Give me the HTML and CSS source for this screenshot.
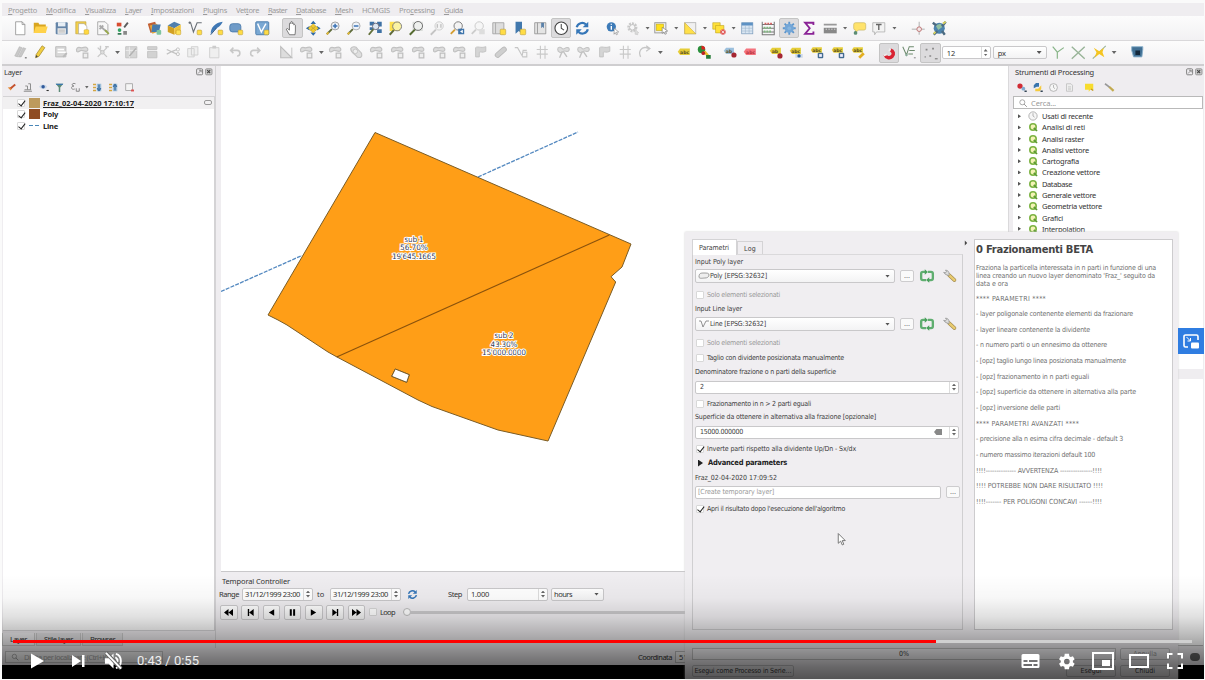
FILE: index.html
```html
<!DOCTYPE html>
<html lang="it">
<head>
<meta charset="utf-8">
<title>QGIS</title>
<link rel="stylesheet" href="styles.css">
</head>
<body>
<svg class="defs">
<symbol id="new" viewBox="0 0 20 20"><path d="M5 3h7l3 3v11H5z" fill="#fff" stroke="#888" stroke-width=".8"/><path d="M12 3v3h3" fill="none" stroke="#888" stroke-width=".8"/></symbol>
<symbol id="open" viewBox="0 0 20 20"><path d="M3 4h5l1 2h7v9H3z" fill="#d9a520"/><path d="M5 8h13l-2 7H3z" fill="#ffd24a"/></symbol>
<symbol id="save" viewBox="0 0 20 20"><rect x="4" y="3.500" width="13" height="13" rx="1" fill="#6585a8"/><rect x="6.500" y="3.500" width="8" height="4.500" fill="#e7eef5"/><rect x="6" y="10" width="9" height="6" fill="#eee"/><path d="M7 12h7M7 14h7" stroke="#999" stroke-width=".7"/></symbol>
<symbol id="layout" viewBox="0 0 20 20"><path d="M3 3h11v13H3z" fill="#f3d04d" stroke="#b99a2e" stroke-width=".6"/><path d="M6 5h6l3 3v8H6z" fill="#fff" stroke="#999" stroke-width=".6"/><rect x="12" y="11.500" width="5" height="5" rx="1" fill="#ffd83f" stroke="#c7a12a" stroke-width=".5"/></symbol>
<symbol id="layman" viewBox="0 0 20 20"><path d="M4 3h8l3 3v11H4z" fill="#f8f8f8" stroke="#888" stroke-width=".7"/><path d="M6 7l8 7M6 11l4-4" stroke="#aaa" stroke-width="2"/><path d="M12 12l4 4" stroke="#97a84a" stroke-width="2"/></symbol>
<symbol id="style" viewBox="0 0 20 20"><rect x="3" y="4" width="5" height="4" fill="#d84d31"/><circle cx="6" cy="12" r="2" fill="#35a465"/><path d="M4 15h4v2H4z" fill="#387a55"/><path d="M15 4l-4 5" stroke="#5c5c5c" stroke-width="2"/><path d="M10 13h4v4h-4z" fill="#888"/></symbol>
<symbol id="addlayer" viewBox="0 0 20 20"><path d="M3 5l8-2 3 9-8 3z" fill="#c25f33"/><path d="M5 7l8-2 3 8-8 3z" fill="#e3a63c"/><path d="M8 6h9l-2 8H7z" fill="#477bad"/><rect x="12.500" y="12" width="5" height="5" rx="1" fill="#7fc4a0"/></symbol>
<symbol id="geopkg" viewBox="0 0 20 20"><path d="M3 7l7-4 7 3-7 4z" fill="#4f7fae"/><path d="M3 7l7 3v7l-7-3z" fill="#d2a023"/><path d="M10 10l7-4v7l-7 4z" fill="#f0c33b"/><rect x="12" y="12" width="5" height="5" rx="1" fill="#ffe157" stroke="#b78d20" stroke-width=".5"/></symbol>
<symbol id="shp" viewBox="0 0 20 20"><path d="M3 4h2l3 10 4-10h5" fill="none" stroke="#6a7077" stroke-width="1.200"/><circle cx="4" cy="4" r="1.200" fill="#6a7077"/><rect x="12" y="12" width="5" height="5" rx="1" fill="#ffdc45" stroke="#b89c3c" stroke-width=".6"/></symbol>
<symbol id="spatial" viewBox="0 0 20 20"><path d="M4 16C4 9 9 4 17 3c-2 5-7 7-9 9z" fill="#3f78b5"/><path d="M4 17l6-7" stroke="#1e4d7c"/><rect x="12" y="12" width="5" height="5" rx="1" fill="#ffdc45" stroke="#b89c3c" stroke-width=".6"/></symbol>
<symbol id="virt" viewBox="0 0 20 20"><rect x="3" y="5" width="12" height="9" rx="3" fill="#6f9bc8" stroke="#3d70a6" stroke-width=".8"/><rect x="12" y="12" width="5" height="5" rx="1" fill="#ffdc45" stroke="#b89c3c" stroke-width=".6"/></symbol>
<symbol id="meshl" viewBox="0 0 20 20"><rect x="3" y="3" width="14" height="14" rx="1" fill="#7aa8d3" stroke="#4b7cab"/><path d="M5 5l4 9 5-9" fill="none" stroke="#fff" stroke-width="1.500"/><rect x="12" y="12" width="5" height="5" rx="1" fill="#ffdc45" stroke="#b89c3c" stroke-width=".6"/></symbol>
<symbol id="hand" viewBox="0 0 20 20"><path d="M7 17L3.500 11l1.300-.7L7 12V5c0-1 1.500-1 1.500 0V3.500c0-1 1.600-1 1.600 0V5c0-1 1.600-1 1.600 0v1.500c.5-.8 1.700-.5 1.700.5v6L13 17z" fill="#fff" stroke="#555" stroke-width=".8"/></symbol>
<symbol id="panto" viewBox="0 0 20 20"><path d="M10 2l3 3.500H7zM10 18l3-3.500H7zM2 10l4-2.500v5zM18 10l-4-2.500v5z" fill="#2f6aa8"/><path d="M10 5l2.700 2.500L10 10 7.300 7.500zM10 10l2.700 2.500L10 15l-2.700-2.500zM7 7.500L9.700 10 7 12.500 4.500 10zM13 7.500l2.500 2.500-2.500 2.500-2.700-2.500z" fill="#f2ca2e" stroke="#a88a16" stroke-width=".4"/></symbol>
<symbol id="zin" viewBox="0 0 20 20"><path d="M8.500 11L3 16.500" stroke="#5f6b3b" stroke-width="2"/><path d="M5 14.500l-2 2" stroke="#e2b93b" stroke-width="2"/><circle cx="12" cy="7.500" r="4.300" fill="#eef3f9" stroke="#999"/><path d="M12 5v5M9.500 7.500h5" stroke="#3b73b4" stroke-width="1.600"/></symbol>
<symbol id="zout" viewBox="0 0 20 20"><path d="M8.500 11L3 16.500" stroke="#5f6b3b" stroke-width="2"/><path d="M5 14.500l-2 2" stroke="#e2b93b" stroke-width="2"/><circle cx="12" cy="7.500" r="4.300" fill="#eef3f9" stroke="#aaa"/><path d="M9.500 7.500h5" stroke="#3b73b4" stroke-width="1.600"/></symbol>
<symbol id="zfull" viewBox="0 0 20 20"><path d="M4 3h5v4H4zM12 3h5v5h-5zM4 9h4v3H4zM12 11h5v4h-5z" fill="#3e71a4"/><circle cx="10.500" cy="8" r="3.500" fill="#dce6f1" stroke="#667"/><path d="M8 11l-5 6" stroke="#63703a" stroke-width="2"/></symbol>
<symbol id="zsel" viewBox="0 0 20 20"><rect x="4" y="3" width="11" height="10" fill="#ffe14d"/><circle cx="12" cy="8" r="4.800" fill="#fbf3a2" stroke="#777"/><path d="M8.500 12L4 17" stroke="#5f6b3b" stroke-width="2.200"/></symbol>
<symbol id="zlay" viewBox="0 0 20 20"><rect x="6" y="3" width="11" height="10" fill="#d9dcd9"/><circle cx="12" cy="7.500" r="4.800" fill="#eef0ee" stroke="#666"/><path d="M8.500 11.500L3 17" stroke="#566b32" stroke-width="2.200"/></symbol>
<symbol id="znat" viewBox="0 0 20 20"><circle cx="12" cy="7.500" r="4.500" fill="#f3f3f3" stroke="#ccc"/><path d="M8.500 11.500L3 17" stroke="#c4c4c4" stroke-width="2"/><path d="M10 5.500v4M14 5.500v4" stroke="#aaa"/></symbol>
<symbol id="zlast" viewBox="0 0 20 20"><circle cx="11" cy="7.500" r="4.500" fill="#f3f3f3" stroke="#777"/><path d="M7.500 11.500L3 16" stroke="#d39d31" stroke-width="2"/><rect x="11" y="10.500" width="6.500" height="6" fill="#3e74ab"/><path d="M16 11.500l-3 2 3 2z" fill="#fff"/></symbol>
<symbol id="znext" viewBox="0 0 20 20"><circle cx="11" cy="7.500" r="4.500" fill="#f6f6f6" stroke="#c9c9c9"/><path d="M7.500 11.500L3 16" stroke="#ccc" stroke-width="2"/><rect x="11" y="11" width="6" height="5.500" fill="#ddd"/></symbol>
<symbol id="newmap" viewBox="0 0 20 20"><path d="M3 4h12v12H3z" fill="#ddd" stroke="#999" stroke-width=".8"/><path d="M6 4v12" stroke="#aaa"/><rect x="11" y="11" width="6" height="6" rx="1" fill="#ffdc45" stroke="#b89c3c" stroke-width=".6"/></symbol>
<symbol id="book" viewBox="0 0 20 20"><path d="M6 3h7v13l-3.500-3L6 16z" fill="#4178ad"/><rect x="11" y="11" width="6" height="6" rx="1" fill="#ffdc45" stroke="#b89c3c" stroke-width=".6"/></symbol>
<symbol id="bmk" viewBox="0 0 20 20"><path d="M4 4h12v12H4z" fill="#e4e4e4" stroke="#888" stroke-width=".8"/><path d="M7 4v12" stroke="#999"/><path d="M11 4h3v6l-1.500-1.500L11 10z" fill="#587fa8"/></symbol>
<symbol id="clock" viewBox="0 0 20 20"><circle cx="10" cy="10" r="6.800" fill="#fff" stroke="#444" stroke-width="1.200"/><path d="M10 5.500V10l3 2" fill="none" stroke="#444" stroke-width="1.100"/></symbol>
<symbol id="refresh" viewBox="0 0 20 20"><path d="M4 9a6 6 0 0 1 10-3M16 11a6 6 0 0 1-10 3" fill="none" stroke="#3576b8" stroke-width="2.400"/><path d="M16.500 3v6h-6zM3.500 17v-6h6z" fill="#3576b8"/></symbol>
<symbol id="ident" viewBox="0 0 20 20"><circle cx="9" cy="8.500" r="5" fill="#3d7bb8"/><path d="M9 7.500v4M9 5v1.200" stroke="#fff" stroke-width="1.500"/><path d="M12 10l5 4-2.500.3 1.200 2.200-1.200.6-1.100-2.300L12 16.500z" fill="#fff" stroke="#777" stroke-width=".6"/></symbol>
<symbol id="action" viewBox="0 0 20 20"><circle cx="9" cy="9" r="4" fill="none" stroke="#c9c9c9" stroke-width="3" stroke-dasharray="2 1"/><circle cx="9" cy="9" r="3" fill="none" stroke="#c4c4c4"/><path d="M12 11l4 4-2 .3 1 1.700-3-.5z" fill="#ddd" stroke="#bbb" stroke-width=".5"/></symbol>
<symbol id="select" viewBox="0 0 20 20"><rect x="3" y="4" width="12" height="11" fill="#eee" stroke="#999"/><rect x="4.500" y="5.500" width="8" height="7" fill="#ffe11c" stroke="#baa51d" stroke-width=".6"/><path d="M11 9l6 4-2.500.5 1 2.500-1.500.5-1-2.500-2 1.500z" fill="#fff" stroke="#666" stroke-width=".6"/></symbol>
<symbol id="selval" viewBox="0 0 20 20"><rect x="4" y="4" width="12" height="12" fill="#f0f0f0" stroke="#aaa" stroke-width=".8"/><path d="M4 4l12 12H4z" fill="#ffe04a" stroke="#c8aa33" stroke-width=".6"/></symbol>
<symbol id="desel" viewBox="0 0 20 20"><path d="M3 4h8v7H3z" fill="#ffe13a" stroke="#baa01c" stroke-width=".6"/><path d="M6 7h9v8H6z" fill="#ffe13a" stroke="#baa01c" stroke-width=".6"/><circle cx="14" cy="14" r="3" fill="#e05a5a"/><path d="M12.500 12.500l3 3M15.500 12.500l-3 3" stroke="#fff" stroke-width=".8"/></symbol>
<symbol id="table" viewBox="0 0 20 20"><rect x="4" y="4" width="12" height="12" fill="#dbe7f3" stroke="#7c9cbd" stroke-width=".8"/><path d="M4 4h12v3H4z" fill="#5e92c4"/><path d="M8 7v9M12 7v9M4 10h12M4 13h12" stroke="#9bb4cd" stroke-width=".6"/></symbol>
<symbol id="abacus" viewBox="0 0 20 20"><path d="M3.500 3v14M16.500 3v14M3 6h14M3 10h14M3 14h14M3 17h14" stroke="#777" stroke-width="1.100"/><path d="M6 5h8" stroke="#d96262" stroke-width="2" stroke-dasharray="2 1"/><path d="M5 9.500h9M5 13.500h9" stroke="#80b980" stroke-width="2" stroke-dasharray="2 1"/></symbol>
<symbol id="gear" viewBox="0 0 20 20"><path d="M10 3v14M3 10h14M5 5l10 10M15 5L5 15" stroke="#5d96cd" stroke-width="2"/><circle cx="10" cy="10" r="5" fill="#73a6d7"/><circle cx="10" cy="10" r="2" fill="#87b5de"/></symbol>
<symbol id="sigma" viewBox="0 0 20 20"><path d="M14.500 6.500V4h-9l5 6-5 6h9v-2.500" fill="none" stroke="#8a2396" stroke-width="2"/></symbol>
<symbol id="ruler" viewBox="0 0 20 20"><path d="M3 6h14" stroke="#999" stroke-width="2"/><rect x="3" y="9.500" width="14" height="6" fill="#888"/><path d="M5 11h1.500M8 11h1.500M11 11h1.500M14 11h1.500" stroke="#ddd" stroke-width="1"/></symbol>
<symbol id="tip" viewBox="0 0 20 20"><path d="M6 4h9a2 2 0 0 1 2 2v4a2 2 0 0 1-2 2H9l-3 3v-3a2 2 0 0 1-2-2V6a2 2 0 0 1 2-2z" fill="#ffe36c" stroke="#c8b45c" stroke-width=".7"/><circle cx="6" cy="15" r="2" fill="#5b8c74"/></symbol>
<symbol id="annot" viewBox="0 0 20 20"><path d="M3 4h13v10H7l-2 3v-3H3z" fill="#f3f3f3" stroke="#aaa" stroke-width=".8"/><path d="M6.500 6h6M9.500 6v6" stroke="#666" stroke-width="1.500"/></symbol>
<symbol id="cross" viewBox="0 0 20 20"><path d="M11 3v14M3 11h14" stroke="#aaa"/><circle cx="11" cy="11" r="2.500" fill="#f3e8e8" stroke="#bc6f6f"/></symbol>
<symbol id="globe" viewBox="0 0 20 20"><circle cx="10" cy="10" r="6" fill="#4c83ad"/><path d="M6 7l5-2 3 3-5 4z" fill="#90bfa0"/><path d="M3 4l4 3M17 3l-4 5M4 17l4-4M16 17l-3-4" stroke="#4c6b82" stroke-width="2.600"/><path d="M14 5l3-2M4 16l2-2" stroke="#d6cf5b" stroke-width="2"/></symbol>
<symbol id="pens" viewBox="0 0 20 20"><path d="M4 14L9 4l3 1-5 10zM8 15l5-10 3 1-5 9z" fill="#c8c8c8" stroke="#aaa" stroke-width=".5"/><path d="M15 16h2" stroke="#888" stroke-width="1.500"/></symbol>
<symbol id="pen" viewBox="0 0 20 20"><path d="M5.500 12.500L12 3l3 2-6.500 9.500L5 16z" fill="#f1ce42" stroke="#987e25" stroke-width=".7"/><path d="M5.500 13L5 16l2.500-1.500z" fill="#444"/></symbol>
<symbol id="gsave" viewBox="0 0 20 20"><path d="M4 4h11v11H4z" fill="#d7d7d7" stroke="#bbb"/><path d="M6 7h7M6 10h9" stroke="#fff" stroke-width="1.500"/><path d="M12 15l4-4" stroke="#bbb" stroke-width="2"/></symbol>
<symbol id="gpoly" viewBox="0 0 20 20"><path d="M4 9c-1-3 1-5 4-4s5-2 7 0 1 4-1 4-3-1-5-1-3 3-5 1z" fill="#dcdcdc" stroke="#c2c2c2" stroke-width="1.300"/><path d="M11 11h5v5h-5z" fill="#eee" stroke="#bdbdbd" stroke-width="1.300"/></symbol>
<symbol id="gnode" viewBox="0 0 20 20"><path d="M4 5l10 10M14 5L4 15M12 4h4M7 3v4" stroke="#c9c9c9" stroke-width="1.500"/><circle cx="9" cy="10" r="2" fill="#ddd" stroke="#c2c2c2"/></symbol>
<symbol id="gtable" viewBox="0 0 20 20"><path d="M4 4h12v12H4z" fill="#d5d5d5" stroke="#c2c2c2"/><path d="M4 8h12M8 4v12" stroke="#eee"/><path d="M8 14l7-8" stroke="#b2b2b2" stroke-width="1.500"/></symbol>
<symbol id="gtrash" viewBox="0 0 20 20"><path d="M5 4h10v3H5zM5 9h10v7H5z" fill="#d2d2d2" stroke="#c2c2c2"/></symbol>
<symbol id="gcut" viewBox="0 0 20 20"><path d="M3 7l11 5M3 12l6-3 5-2" stroke="#c2c2c2" stroke-width="1.300" fill="none"/><circle cx="15" cy="7" r="1.700" fill="none" stroke="#c2c2c2"/><circle cx="15" cy="12" r="1.700" fill="none" stroke="#c2c2c2"/></symbol>
<symbol id="gcopy" viewBox="0 0 20 20"><path d="M4 6h7v9H4zM8 4h7v9H8z" fill="#efefef" stroke="#cfcfcf"/></symbol>
<symbol id="gpaste" viewBox="0 0 20 20"><path d="M5 5h10v11H5z" fill="#efefef" stroke="#cfcfcf"/><path d="M8 3h4v3H8z" fill="#ccc"/></symbol>
<symbol id="gundo" viewBox="0 0 20 20"><path d="M5 8h7c4 0 4 6 0 6M8 5L5 8l3 3" fill="none" stroke="#c8c8c8" stroke-width="1.700"/></symbol>
<symbol id="gredo" viewBox="0 0 20 20"><path d="M15 8H8c-4 0-4 6 0 6M12 5l3 3-3 3" fill="none" stroke="#c8c8c8" stroke-width="1.700"/></symbol>
<symbol id="gtri" viewBox="0 0 20 20"><path d="M4 4l12 12H4z" fill="#ddd" stroke="#bdbdbd" stroke-width="1.200"/><path d="M16 5v11" stroke="#c2c2c2"/></symbol>
<symbol id="gdonut" viewBox="0 0 20 20"><path d="M4 6c2-3 6-2 7 0s5 3 5 7-5 3-6 1-6-3-6-8z" fill="#dedede" stroke="#c2c2c2" stroke-width="1.200"/><circle cx="9" cy="9" r="2.500" fill="#eee" stroke="#c2c2c2"/></symbol>
<symbol id="gband" viewBox="0 0 20 20"><path d="M6 13L13 7" stroke="#bcbcbc" stroke-width="6" stroke-linecap="round"/><path d="M6 13L13 7" stroke="#cfcfcf" stroke-width="4" stroke-linecap="round"/></symbol>
<symbol id="gflag" viewBox="0 0 20 20"><path d="M5 15V5c3-2 5 1 11-1v5c-4 2-5 0-7 1v5z" fill="#d5d5d5" stroke="#c2c2c2"/></symbol>
<symbol id="gline" viewBox="0 0 20 20"><path d="M3 5h3l5 9 1-6h4M11 10h5v5h-5" fill="none" stroke="#c6c6c6" stroke-width="1.200"/></symbol>
<symbol id="gsplit" viewBox="0 0 20 20"><path d="M4 7c0-3 3-3 5-1s3-2 6-1 1 5-2 4-3 0-4 1-5 0-5-3z" fill="#ddd" stroke="#c4c4c4" stroke-width="1.200"/><path d="M9 9l-3 7M10 9l4 6" stroke="#c2c2c2" stroke-width="1.500"/></symbol>
<symbol id="gvert" viewBox="0 0 20 20"><path d="M8 3v14M13 3v14M4 7h12M4 12h12" stroke="#c9c9c9" stroke-width="1.200"/></symbol>
<symbol id="grot" viewBox="0 0 20 20"><path d="M5 15c-3-6 1-11 6-10l3 1M11 3l4 3-4 3" fill="none" stroke="#c6c6c6" stroke-width="1.400"/></symbol>
<symbol id="lab" viewBox="0 0 20 20"><path d="M3 9.500l2.500-3.500H16v7H5.500z" fill="#e5cd38"/><text x="5.500" y="11.800" class="abc">abc</text></symbol>
<symbol id="diag" viewBox="0 0 20 20"><circle cx="7" cy="7" r="4" fill="#2a8f3b"/><path d="M7 3a4 4 0 0 1 4 4H7z" fill="#d22"/><path d="M10 9l5 6" stroke="#eac22c" stroke-width="3"/><path d="M12 13h5v4h-5z" fill="#287c38"/><circle cx="9" cy="11" r="2" fill="#b22"/></symbol>
<symbol id="labpin" viewBox="0 0 20 20"><path d="M3 8.500l2.500-3.500H14v7H5.500z" fill="#9cc0dd"/><text x="5" y="10.800" class="abc">ab</text><circle cx="14" cy="13" r="2.800" fill="#a52632"/></symbol>
<symbol id="labred" viewBox="0 0 20 20"><path d="M3 9.500l2.500-3.500H16v7H5.500z" fill="#f4737d"/><text x="5.500" y="11.800" class="abc red">abc</text></symbol>
<symbol id="labpin2" viewBox="0 0 20 20"><path d="M3 8.500l2.500-3.500H15v7H5.500z" fill="#e5cd38"/><text x="5" y="10.800" class="abc">ab</text><circle cx="14" cy="14" r="2.800" fill="#a52632"/></symbol>
<symbol id="labeye" viewBox="0 0 20 20"><path d="M3 8.500l2.500-3.500H15v7H5.500z" fill="#e5cd38"/><text x="4.500" y="10.800" class="abc">abc</text><path d="M9 12h8v4H9z" fill="#cdd9e6"/><circle cx="13" cy="14" r="1.800" fill="#2e5f96"/></symbol>
<symbol id="labmv" viewBox="0 0 20 20"><path d="M3 7.500l2-3h10v6H5z" fill="#e5cd38"/><text x="4.500" y="9.500" class="abc">abc</text><rect x="10.500" y="10.500" width="6" height="6" rx="1" fill="#456c91"/><rect x="12" y="12" width="3" height="3" fill="#eef"/></symbol>
<symbol id="labed" viewBox="0 0 20 20"><path d="M3 7.500l2-3h10v6H5z" fill="#e5cd38"/><text x="4.500" y="9.500" class="abc">abc</text><path d="M11 16l5-5" stroke="#e3ae20" stroke-width="3"/></symbol>
<symbol id="magnet" viewBox="0 0 20 20"><path d="M5.500 11.500c1 3.500 5 4.500 7.500 2s1.700-6-2-7" fill="none" stroke="#d92231" stroke-width="3.800"/><path d="M4 12.300l3.500-1M10 8l1.200-3.300" stroke="#eee" stroke-width="2"/></symbol>
<symbol id="vtx" viewBox="0 0 20 20"><path d="M3 4l4 9 3-9h5M10 8h6M9 12h5" fill="none" stroke="#6d8a6d" stroke-width="1.100"/><circle cx="7" cy="13" r="1.300" fill="#8a9"/><path d="M15 16h2" stroke="#777"/></symbol>
<symbol id="dots" viewBox="0 0 20 20"><path d="M5 6h2M12 5h2M9 13h2M4 14h1" stroke="#888" stroke-width="1.800"/><path d="M15 16h3" stroke="#666"/></symbol>
<symbol id="topo" viewBox="0 0 20 20"><path d="M4 4l5 6 7-5M9 10v7" fill="none" stroke="#89b589" stroke-width="1.300"/></symbol>
<symbol id="inter" viewBox="0 0 20 20"><path d="M3 4l14 13M17 4L3 17" stroke="#98b498" stroke-width="1.500"/></symbol>
<symbol id="star" viewBox="0 0 20 20"><path d="M17 3L3 17" stroke="#9ab49a" stroke-width="1.200"/><path d="M4 5l6 4 5-4-1.500 5 2 5.500L10 12l-5 4 2-6z" fill="#f5c521"/></symbol>
<symbol id="plug" viewBox="0 0 20 20"><path d="M4 4h12v3l-1 8H6L4 8z" fill="#406f93" stroke="#8ab1cc"/><path d="M8 8h5v5H8z" fill="#14283b"/></symbol>
<symbol id="brush" viewBox="0 0 20 20"><path d="M5 10l4 4 3-5z" fill="#e48a3a"/><path d="M9 11l6-5" stroke="#c4522f" stroke-width="2.500"/></symbol>
<symbol id="grp" viewBox="0 0 20 20"><path d="M6 13h9M7 8h3v5M11 5h3v8M5 15h11" fill="none" stroke="#8c8c8c" stroke-width="1.300"/></symbol>
<symbol id="eye" viewBox="0 0 20 20"><path d="M4 9c3-4 8-4 11 0-3 4-8 4-11 0z" fill="#cbd8e8"/><circle cx="9.500" cy="9" r="2.300" fill="#315a9b"/><path d="M14 14h3" stroke="#333" stroke-width="1.500"/></symbol>
<symbol id="funnel" viewBox="0 0 20 20"><path d="M5 5h10l-4 5v6H9v-6z" fill="#5e8b78"/><path d="M5 5h10l-1 1.500H6z" fill="#3c78af"/></symbol>
<symbol id="eps" viewBox="0 0 20 20"><path d="M10 5c-5-2-6 3-2 3-5 0-4 6 1 4M11 11v4h4v-4" fill="none" stroke="#777" stroke-width="1.100"/></symbol>
<symbol id="exp" viewBox="0 0 20 20"><path d="M4 6h4M4 10h4M4 14h4" stroke="#d4a642" stroke-width="2"/><path d="M9 5h6v10H9z" fill="#9dbfda"/><path d="M12 6v6M9.500 11l2.500 3 2.500-3" stroke="#2a6199" fill="none" stroke-width="1.500"/></symbol>
<symbol id="col" viewBox="0 0 20 20"><path d="M4 6h4M4 10h4M4 14h4" stroke="#d4a642" stroke-width="2"/><path d="M9 5h6v10H9z" fill="#9dbfda"/><path d="M12 14V8M9.500 9L12 6l2.500 3" stroke="#2a6199" fill="none" stroke-width="1.500"/></symbol>
<symbol id="rem" viewBox="0 0 20 20"><rect x="5" y="5" width="9" height="9" fill="#f4f4f4" stroke="#999"/><path d="M12 14h4" stroke="#dd5151" stroke-width="2.500"/></symbol>
<symbol id="model" viewBox="0 0 20 20"><circle cx="8" cy="8" r="3.500" fill="#d02b35"/><circle cx="12.500" cy="11.500" r="2.500" fill="#7fa9cf"/><path d="M14 15h3" stroke="#345" stroke-width="2"/></symbol>
<symbol id="py" viewBox="0 0 20 20"><path d="M5 11V7l3-3h4v5H9z" fill="#3975ae"/><path d="M15 7v5l-2 3H7v-3.500h4z" fill="#f5cb3e"/><path d="M14 15h3" stroke="#345" stroke-width="2"/></symbol>
<symbol id="gclock" viewBox="0 0 20 20"><circle cx="10" cy="10" r="5.200" fill="#f6f6f6" stroke="#a3a3a3"/><path d="M10 6.500V10l2 1.500" fill="none" stroke="#999" stroke-width=".9"/></symbol>
<symbol id="doc" viewBox="0 0 20 20"><path d="M6 5h6l2 2v8H6z" fill="#eee" stroke="#bbb"/><path d="M8 9h4M8 11h4M8 13h4" stroke="#bbb" stroke-width=".8"/></symbol>
<symbol id="note" viewBox="0 0 20 20"><path d="M4 5h11v8h-4l-2 3v-3H4z" fill="#f7dc2e"/><path d="M12 12l3 2" stroke="#c49a22" stroke-width="2"/></symbol>
<symbol id="wrench" viewBox="0 0 20 20"><path d="M9 9l6 5.500" stroke="#a28b50" stroke-width="4" stroke-linecap="round"/><path d="M9 9l6 5.500" stroke="#e9cb6f" stroke-width="2.600" stroke-linecap="round"/><path d="M9.500 9.500C7 9.500 4 8 3 6l2 .5L6 5 5 3.500c2 0 4.500 1.500 4 5" fill="#ddd" stroke="#888" stroke-width=".8"/></symbol>
<symbol id="swrench" viewBox="0 0 20 20"><path d="M9.500 9l6 5.500" stroke="#c2aa4f" stroke-width="3"/><path d="M4 5l6 4.500" stroke="#999" stroke-width="2.200"/></symbol>
<symbol id="iter" viewBox="0 0 20 20"><path d="M8 5.500H5.500a2 2 0 0 0-2 2v5a2 2 0 0 0 2 2H9M11 5.500h3.500a2 2 0 0 1 2 2v5a2 2 0 0 1-2 2H12" fill="none" stroke="#5fae70" stroke-width="2.600"/><path d="M7.500 2.500L11 5.500 7.500 8.500zM12.500 11.500L9 14.500l3.500 3z" fill="#49a05c"/></symbol>
<symbol id="q" viewBox="0 0 20 20"><circle cx="10" cy="10" r="4" fill="#f4f3b6" stroke="#7cb342" stroke-width="2"/><path d="M11 11l4 4" stroke="#5d9b31" stroke-width="2.200"/></symbol>
<symbol id="lens" viewBox="0 0 20 20"><circle cx="9" cy="9" r="3.600" fill="none" stroke="#888" stroke-width="1"/><path d="M11.500 11.500l4 4" stroke="#888" stroke-width="1.200"/></symbol>
<symbol id="float" viewBox="0 0 8 8"><rect x=".6" y=".8" width="6" height="6" rx="1" fill="none" stroke="#777" stroke-width=".9"/><path d="M2 5.500L5 2.500M3 2.300h2.200v2" stroke="#777" stroke-width=".8" fill="none"/></symbol>
<symbol id="close" viewBox="0 0 8 8"><rect x=".6" y=".8" width="6.400" height="6" rx="1" fill="#ccc" stroke="#888" stroke-width=".8"/><path d="M2.200 2.200l3 3M5.200 2.200l-3 3" stroke="#444" stroke-width="1.100"/></symbol>
</svg>

<div class="video">
<div class="qgis">
  <nav class="menu">
    <span data-w="29"><u>P</u>rogetto</span><span data-w="30"><u>M</u>odifica</span><span data-w="31"><u>V</u>isualizza</span><span data-w="17"><u>L</u>ayer</span><span data-w="43"><u>I</u>mpostazioni</span><span data-w="24"><u>P</u>lugins</span><span data-w="23">Vet<u>t</u>ore</span><span data-w="19"><u>R</u>aster</span><span data-w="30"><u>D</u>atabase</span><span data-w="18"><u>M</u>esh</span><span data-w="28">HCMGIS</span><span data-w="36">Pro<u>c</u>essing</span><span data-w="19"><u>G</u>uida</span>
  </nav>
  <div class="toolbar" data-icons="new open save layout layman style | addlayer geopkg shp spatial virt ; meshl | *hand panto zin zout zfull zsel zlay znat zlast znext newmap book bmk *clock refresh | ident action > select > selval > desel > table abacus *gear sigma ruler > tip annot > | cross globe"></div>
  <div class="toolbar second">
    <div class="icons" data-icons="pens pen gsave gpoly gnode > gtable gtrash gcut gcopy gpaste gundo gredo | gtri gpoly > gpoly gdonut gpoly gpoly gpoly gpoly gpoly gflag gband gline gvert gsplit gsplit gflag gvert grot > | lab diag ; labpin labred ; labpin2 labeye labmv labmv labed | *magnet vtx *dots"></div>
    <div class="field snap"><span>12</span><i class="spin"></i></div>
    <div class="combo unit"><span>px</span><i class="arrow"></i></div>
    <div class="icons" data-icons="topo inter star > | plug"></div>
  </div>

  <div class="main">
    <aside class="left">
      <div class="title"><span data-w="18">Layer</span><span class="dock"><svg><use href="#float"/></svg><svg><use href="#close"/></svg></span></div>
      <div class="panelbar leftbar" data-icons="brush grp eye funnel eps > exp col rem"></div>
      <div class="layers">
        <div class="layer sel"><i class="chk on"></i><i class="sw tan"></i><b data-w="91"><u>Fraz_02-04-2020 17:10:17</u></b><i class="mem"></i></div>
        <div class="layer"><i class="chk on"></i><i class="sw brown"></i><b data-w="15">Poly</b></div>
        <div class="layer"><i class="chk on"></i><i class="sw dash"></i><b data-w="15">Line</b></div>
      </div>
      <div class="tabs"><span class="cur" data-w="17">Layer</span><span data-w="29">Stile layer</span><span data-w="25">Browser</span></div>
    </aside>

    <section class="center">
      <svg class="map" viewBox="221 66 787 505">
        <path class="guide" d="M221 291.500L302 255.500M478 177L578 132"/>
        <path class="parcel" fill-rule="evenodd" d="M375 132.500L631 244 622 267 611 276.700 615.700 282 548 441 498 430 432 406.500 418 400 337 357 328 352 287 325 278 320 268 315zM395.300 369l14 5.700-2.600 7.600-15-6z"/>
        <path class="divider" d="M609.300 235L336.700 357"/>
        <path class="hole" d="M395.300 369l14 5.700-2.600 7.600-15-6z"/>
        <g class="maplabel">
          <text x="414" y="241.500" textLength="19">sub 1</text><text x="414" y="250" textLength="28">56.70%</text><text x="414" y="258.500" textLength="44">19'645.1665</text>
          <text x="504" y="338" textLength="19">sub 2</text><text x="504" y="346.500" textLength="27">43.30%</text><text x="504" y="355" textLength="44">15'000.0000</text>
        </g>
      </svg>
      <div class="temporal">
        <div class="trow head"><span data-w="68">Temporal Controller</span></div>
        <div class="trow range">
          <span data-w="20">Range</span>
          <div class="field date"><span data-w="55">31/12/1999 23:00</span><i class="spin"></i></div>
          <span class="to">to</span>
          <div class="field date"><span data-w="55">31/12/1999 23:00</span><i class="spin"></i></div>
          <svg class="tref"><use href="#refresh"/></svg>
          <span class="step" data-w="14">Step</span>
          <div class="field stepf"><span data-w="18">1.000</span><i class="spin"></i></div>
          <div class="combo hours"><span data-w="18">hours</span><i class="arrow"></i></div>
        </div>
        <div class="trow play">
          <button><svg viewBox="0 0 12 10"><path d="M6 1v8L1 5zM11 1v8L6 5z"/></svg></button>
          <button><svg viewBox="0 0 12 10"><path d="M3 1h1.500v8H3zM9.500 1v8L4.500 5z"/></svg></button>
          <button><svg viewBox="0 0 12 10"><path d="M9 1.500v7L3 5z"/></svg></button>
          <button><svg viewBox="0 0 12 10"><path d="M3 1.500h2.200v7H3zM6.700 1.500h2.200v7H6.700z"/></svg></button>
          <button><svg viewBox="0 0 12 10"><path d="M3 1.500v7L9 5z"/></svg></button>
          <button><svg viewBox="0 0 12 10"><path d="M2.500 1v8l5-4zM7.500 1H9v8H7.500z"/></svg></button>
          <button><svg viewBox="0 0 12 10"><path d="M1 1v8l5-4zM6 1v8l5-4z"/></svg></button>
          <i class="chk"></i><span class="loop" data-w="15">Loop</span><i class="knob"></i><i class="groove"></i>
        </div>
      </div>
    </section>

    <aside class="right">
      <div class="title"><span data-w="79">Strumenti di Processing</span><span class="dock"><svg><use href="#float"/></svg><svg><use href="#close"/></svg></span></div>
      <div class="panelbar rightbar" data-icons="model py gclock doc ; note ; swrench"></div>
      <div class="search"><svg><use href="#lens"/></svg><span data-w="25">Cerca...</span></div>
      <div class="tree">
        <div><svg><use href="#gclock"/></svg><span data-w="51">Usati di recente</span></div>
        <div><svg><use href="#q"/></svg><span data-w="43">Analisi di reti</span></div>
        <div><svg><use href="#q"/></svg><span data-w="42">Analisi raster</span></div>
        <div><svg><use href="#q"/></svg><span data-w="47">Analisi vettore</span></div>
        <div><svg><use href="#q"/></svg><span data-w="37">Cartografia</span></div>
        <div><svg><use href="#q"/></svg><span data-w="58">Creazione vettore</span></div>
        <div><svg><use href="#q"/></svg><span data-w="30">Database</span></div>
        <div><svg><use href="#q"/></svg><span data-w="54">Generale vettore</span></div>
        <div><svg><use href="#q"/></svg><span data-w="60">Geometria vettore</span></div>
        <div><svg><use href="#q"/></svg><span data-w="21">Grafici</span></div>
        <div><svg><use href="#q"/></svg><span data-w="43">Interpolation</span></div>
      </div>
      <div class="lower"></div>
    </aside>
  </div>
  <footer class="status">
    <div class="locate"><svg><use href="#lens"/></svg><span data-w="84">Digita per localizzare (Ctrl+K)</span></div>
    <span class="coord" data-w="34">Coordinata</span><div class="cbox">51</div><i class="msg"></i>
  </footer>
</div>

<div class="dialog">
  <div class="body">
    <div class="params">
      <div class="dtabs"><span class="cur"><em data-w="30">Parametri</em></span><span><em data-w="12">Log</em></span></div>
      <div class="pane">
        <div><span data-w="48">Input Poly layer</span></div>
        <div><div class="combo lay"><svg viewBox="0 0 12 8"><path d="M1 5c0-4 2-4 5-4s5 0 5 2-2 3-4 3-6 1-6-1z" fill="#eee" stroke="#888" stroke-width=".8"/></svg><span data-w="57">Poly [EPSG:32632]</span><i class="arrow"></i></div><div class="more">...</div><svg class="dic"><use href="#iter"/></svg><svg class="dic"><use href="#wrench"/></svg></div>
        <div class="off"><i class="chk"></i><span data-w="73">Solo elementi selezionati</span></div>
        <div><span data-w="47">Input Line layer</span></div>
        <div><div class="combo lay"><svg viewBox="0 0 12 8"><path d="M1 1h2l2 6 3-6h3" fill="none" stroke="#777" stroke-width=".8"/></svg><span data-w="56">Line [EPSG:32632]</span><i class="arrow"></i></div><div class="more">...</div><svg class="dic"><use href="#iter"/></svg><svg class="dic"><use href="#wrench"/></svg></div>
        <div class="off"><i class="chk"></i><span data-w="73">Solo elementi selezionati</span></div>
        <div><i class="chk"></i><span data-w="137">Taglio con dividente posizionata manualmente</span></div>
        <div><span data-w="141">Denominatore frazione o n parti della superficie</span></div>
        <div><div class="field wide"><span>2</span><i class="spin"></i></div></div>
        <div><i class="chk"></i><span data-w="104">Frazionamento in n &gt; 2 parti eguali</span></div>
        <div><span data-w="181">Superficie da ottenere in alternativa alla frazione [opzionale]</span></div>
        <div><div class="field wide"><span data-w="43">15000.000000</span><i class="clear"></i><i class="spin"></i></div></div>
        <div><i class="chk on"></i><span data-w="149">Inverte parti rispetto alla dividente Up/Dn - Sx/dx</span></div>
        <div class="adv"><i></i><b data-w="79">Advanced parameters</b></div>
        <div><span data-w="82">Fraz_02-04-2020 17:09:52</span></div>
        <div><div class="field out"><span data-w="76">[Create temporary layer]</span></div><div class="more">...</div></div>
        <div><i class="chk on"></i><span data-w="138">Apri il risultato dopo l'esecuzione dell'algoritmo</span></div>
      </div>
    </div>
    <div class="help">
      <h1><span data-w="117">0 Frazionamenti BETA</span></h1>
      <div class="intro"><span data-w="180">Fraziona la particella interessata in n parti in funzione di una</span><span data-w="179">linea creando un nuovo layer denominato 'Fraz_' seguito da</span><span data-w="32">data e ora</span></div>
      <p><span data-w="70">**** PARAMETRI ****</span></p>
      <p><span data-w="157">- layer poligonale contenente elementi da frazionare</span></p>
      <p><span data-w="114">- layer lineare contenente la dividente</span></p>
      <p><span data-w="131">- n numero parti o un ennesimo da ottenere</span></p>
      <p><span data-w="150">- [opz] taglio lungo linea posizionata manualmente</span></p>
      <p><span data-w="113">- [opz] frazionamento in n parti eguali</span></p>
      <p><span data-w="160">- [opz] superficie da ottenere in alternativa alla parte</span></p>
      <p><span data-w="84">- [opz] inversione delle parti</span></p>
      <p><span data-w="103">**** PARAMETRI AVANZATI ****</span></p>
      <p><span data-w="147">- precisione alla n esima cifra decimale - default 3</span></p>
      <p><span data-w="119">- numero massimo iterazioni default 100</span></p>
      <p><span data-w="126">!!!!-------------- AVVERTENZA ---------------!!!!</span></p>
      <p><span data-w="127">!!!! POTREBBE NON DARE RISULTATO !!!!</span></p>
      <p><span data-w="126">!!!!------- PER POLIGONI CONCAVI ------!!!!</span></p>
    </div>
  </div>
  <div class="progress"><div class="bar">0%</div><div class="btn dim">Annulla</div></div>
  <div class="actions"><div class="btn series"><span data-w="97">Esegui come Processo in Serie…</span></div><div class="btn">Esegui</div><div class="btn">Chiudi</div></div>
  <svg class="fold" viewBox="0 0 5 6"><path d="M1 0l3 3-3 3z"/></svg>
</div>
<svg class="cursor" viewBox="0 0 8 12"><path d="M1 .5v9l2.200-2L4.700 11l1.400-.6L4.700 7H7.500z" fill="#fff" stroke="#666" stroke-width=".8"/></svg>
<div class="pip"><svg viewBox="0 0 20 20"><path d="M7 16H4.500A1.500 1.500 0 0 1 3 14.500v-9A1.500 1.500 0 0 1 4.500 4h11A1.500 1.500 0 0 1 17 5.500V9" fill="none" stroke="#fff" stroke-width="1.600"/><path d="M5.500 6l4 4M9.500 7v3h-3" stroke="#fff" fill="none"/><rect x="10" y="11.500" width="8" height="6" rx="1" fill="#fff"/></svg></div>

<div class="player">
  <div class="seek"><i class="played"></i></div>
  <div class="controls">
    <svg class="pl" viewBox="0 0 14 16"><path d="M0 0l14 8-14 8z"/></svg>
    <svg class="nx" viewBox="0 0 13 12"><path d="M0 0l9 6-9 6zM10 0h2.500v12H10z"/></svg>
    <svg class="mu" viewBox="0 0 20 20"><path d="M1 7h4l5-5v16l-5-5H1z"/><path d="M12 6c3 2 3 6 0 8M12.500 2.500c7 2 7 13 0 15" fill="none" stroke="#fff" stroke-width="2"/><path d="M2 1l16 17" stroke="#666" stroke-width="4"/><path d="M2 1.500L18 18" stroke="#fff" stroke-width="2"/></svg>
    <span class="time" data-w="62">0:43 / 0:55</span>
    <div class="rightc">
      <svg class="cc" viewBox="0 0 18 14"><path fill-rule="evenodd" d="M1.500 0h15A1.500 1.500 0 0 1 18 1.500v11a1.500 1.500 0 0 1-1.500 1.500h-15A1.500 1.500 0 0 1 0 12.500v-11A1.500 1.500 0 0 1 1.500 0zM2 6v2h4V6zm5.500 0v2H16V6zM2 10v2h8.500v-2zm10 0v2h4v-2z"/></svg>
      <svg class="gr" viewBox="0 0 24 24"><path fill-rule="evenodd" d="M21 13.200c.1-.8.1-1.600 0-2.400l2.500-2-2.500-4.300-3 1.200a9 9 0 0 0-2-1.200L15.500 1h-6L9 4.500a9 9 0 0 0-2 1.200L4 4.500 1.500 8.800l2.500 2a9 9 0 0 0 0 2.400l-2.500 2L4 19.500l3-1.200c.6.500 1.300.9 2 1.200l.5 3.500h6l.5-3.500c.7-.3 1.400-.7 2-1.200l3 1.200 2.500-4.300zM12.500 16a4 4 0 1 1 0-8 4 4 0 0 1 0 8z"/></svg>
      <svg class="mp" viewBox="0 0 22 18"><rect x="1" y="1" width="20" height="16" fill="none" stroke="#fff" stroke-width="2"/><rect x="10" y="8" width="8" height="6"/></svg>
      <svg class="th" viewBox="0 0 20 14"><rect x="1" y="1" width="18" height="12" fill="none" stroke="#fff" stroke-width="2"/></svg>
      <svg class="fs" viewBox="0 0 16 16"><path d="M1 5.500V1h4.500M10.500 1H15v4.500M15 10.500V15h-4.500M5.500 15H1v-4.500" fill="none" stroke="#fff" stroke-width="2"/></svg>
    </div>
  </div>
</div>
</div>
<script src="app.js"></script>
</body>
</html>
```
FILE: styles.css
```css
* { box-sizing: border-box; }
body { margin: 0; width: 1205px; height: 680px; overflow: hidden; background: #fafafa; color: #333; font: 7.500px/8px "Noto Sans", "Open Sans", sans-serif; }
i, em { font-style: normal; }
i { display: block; flex: none; }
span, b, em { white-space: nowrap; }
svg { flex: none; display: block; }
.defs { position: absolute; width: 0; height: 0; }
.abc { font: bold 5px "DejaVu Sans", sans-serif; fill: #5a5020; }
.abc.red { fill: #b8323e; }
.video { position: relative; width: 1202px; height: 679px; margin-left: 2px; padding-top: 3px; background: linear-gradient(#fafafa 3px, #000 3px); }
.qgis { display: flex; flex-direction: column; height: 662px; background: #efedf0; }

.menu { display: flex; height: 13px; align-items: center; gap: 9px; padding-left: 6px; color: #9b9b9b; background: #efedf0; }
.toolbar { display: flex; align-items: center; height: 25px; flex: none; padding-left: 7.700px; background: linear-gradient(#fcfcfc, #f2f1f3); border-bottom: 1px solid #d9d8da; }
.toolbar.second { border-bottom: 2px solid #cfced0; }
.icons { display: flex; align-items: center; }
.tool { width: 20.700px; height: 20px; display: grid; place-items: center; flex: none; }
.tool svg { width: 18.500px; height: 18.500px; }
.tool.on { background: #dcdbdd; border: 1px solid #c4c4c4; border-radius: 2px; }
.drop { width: 8px; height: 3px; background: #666; clip-path: polygon(25% 0, 85% 0, 55% 100%); }
.gap { width: 9.700px; height: 12px; }
.gap.small { width: 4.500px; }

.field, .combo { display: flex; align-items: center; justify-content: space-between; height: 13px; padding-left: 4px; background: #fff; border: 1px solid #c9c8ca; border-radius: 2px; }
.combo { background: linear-gradient(#fff, #f3f3f4); }
.spin { width: 9px; height: 100%; border-left: 1px solid #ddd; }
.spin::before, .spin::after { content: ""; display: block; width: 4px; height: 2.500px; margin: 2px auto 0; background: #666; clip-path: polygon(50% 0, 100% 100%, 0 100%); }
.spin::after { clip-path: polygon(0 0, 100% 0, 50% 100%); }
.arrow { width: 5px; height: 3px; margin-right: 4px; background: #555; clip-path: polygon(0 0, 100% 0, 50% 100%); }
.snap { width: 49px; margin-left: 1px; }
.unit { width: 54px; margin: 0 1px 0 2px; }

.main { display: flex; flex: 1; min-height: 0; }
.left { width: 214px; display: flex; flex-direction: column; border-right: 1px solid #d4d3d5; margin-right: 5px; flex: none; }
.title { display: flex; align-items: center; justify-content: space-between; height: 12px; padding: 0 2px; color: #333; }
.dock { display: flex; gap: 1px; }
.dock svg { width: 8px; height: 8px; }
.panelbar { display: flex; align-items: center; height: 18px; }
.panelbar .tool { width: 15.800px; height: 16px; }
.panelbar .tool svg { width: 15px; height: 15px; }
.panelbar .drop { width: 7px; }
.leftbar { padding-left: 2px; }
.layers { height: 535px; border: 1px solid #d4d3d5; border-left: 0; background: #fff; margin-left: 1px; }
.layer { display: flex; align-items: center; height: 11.500px; padding-left: 14px; color: #222; }
.layer.sel { background: #f1f0f1; }
.chk { width: 8px; height: 8px; background: #fff; border: 1px solid #d8d8d8; border-radius: 1px; }
.chk.on::after { content: ""; display: block; width: 3px; height: 5.500px; margin: -.5px 0 0 2px; border: solid #222; border-width: 0 1.300px 1.300px 0; transform: rotate(38deg); }
.sw { width: 11px; height: 10px; margin: 0 3px 0 4px; }
.tan { background: #bd9a5c; }
.brown { background: #8f4c22; }
.dash { height: 1px; background: linear-gradient(90deg, #4a87b8 4px, transparent 4px 6px, #4a87b8 6px 10px, transparent 10px); }
.mem { width: 8px; height: 5px; margin-left: auto; margin-right: 2px; border: 1px solid #999; border-radius: 2px; }
.tabs { display: flex; gap: 1px; margin-top: 2px; height: 13px; }
.tabs span { border: 1px solid #ccc; border-top: 0; padding: 2px 7px; box-sizing: content-box; height: 8px; background: #e6e5e7; }
.tabs .cur { background: #f5f4f6; }

.center { width: 787px; display: flex; flex-direction: column; flex: none; }
.map { width: 787px; height: 505px; background: #fff; }
.guide { stroke: #5489c0; stroke-width: 1.300; stroke-dasharray: 4 1.200; fill: none; }
.parcel { fill: #ff9e17; stroke: #7a5c26; stroke-width: 1; }
.divider { stroke: #8a520c; stroke-width: 1.100; }
.hole { fill: #fff; stroke: #7a5c26; stroke-width: 1; }
.maplabel { font: 7.500px "DejaVu Sans", sans-serif; fill: #323c58; text-anchor: middle; stroke: #fff; stroke-width: 2px; paint-order: stroke; }
.temporal { border-top: 1px solid #c9c8ca; padding-top: 3px; }
.trow { display: flex; align-items: center; height: 18px; }
.head { height: 12px; padding-left: 1px; }
.range { height: 14px; margin-left: -2px; }
.date { width: 71px; margin-left: 3px; padding-left: 2px; }
.to { margin-left: 4px; width: 6px; margin-right: 4px; }
.tref { width: 13px; height: 13px; margin-left: 5px; }
.step { margin-left: 29px; }
.stepf { width: 81px; margin-left: 5px; padding-left: 3px; }
.hours { width: 53px; margin-left: 3px; padding-left: 2px; }
.play { height: 22px; gap: 3.800px; padding-right: 323px; margin-left: -1px; }
.play button { width: 17.500px; height: 15px; padding: 0; flex: none; display: grid; place-items: center; border: 1px solid #c9c8ca; border-radius: 2px; background: linear-gradient(#fff, #f1f1f1); }
.play button svg { width: 11px; height: 9px; }
.loop { margin-right: 4px; }
.play .chk { margin-right: -1px; }
.knob { width: 8px; height: 8px; border: 1px solid #bbb; border-radius: 4px; background: #fff; }
.groove { flex: 1; height: 3px; margin-left: -4px; background: #c9c8ca; }

.right { flex: 1; padding: 0 1px 0 4px; border-left: 1px solid #dad9db; display: flex; flex-direction: column; }
.right .title { padding-right: 0; }
.rightbar { padding-left: 1px; }
.search { display: flex; align-items: center; height: 13px; border: 1px solid #b9b9b9; background: #fff; color: #999; }
.search svg { width: 14px; height: 14px; margin: 0 1px 0 2px; }
.tree { height: 260px; padding-top: 1.500px; background: #fff; }
.tree div { display: flex; align-items: center; height: 11.270px; padding-left: 5px; }
.tree div::before { content: ""; width: 3px; height: 4px; margin-right: 4px; background: #555; clip-path: polygon(0 0, 100% 50%, 0 100%); }
.tree svg { width: 16px; height: 16px; margin: -3px 1px -3px 0; }
.lower { height: 267px; margin-top: 10px; background: #fff; border-bottom: 1px solid #bbb; }
.status { display: flex; align-items: center; height: 17px; padding: 0 4px 0 3px; }
.locate { display: flex; align-items: center; width: 158px; height: 12px; margin-right: 475px; border: 1px solid #c4c4c4; background: #f4f4f4; color: #aaa; }
.locate svg { width: 12px; height: 12px; margin: 0 3px; }
.cbox { width: 200px; margin-left: 3px; padding-left: 3px; height: 12px; line-height: 10px; border: 1px solid #bbb; background: #f4f4f4; }
.msg { width: 10px; height: 8px; margin-left: auto; border-radius: 4px; background: #666; }

.dialog { position: absolute; left: 683px; top: 232px; width: 493px; height: 447px; padding: 7px 5px 0 7px; background: #f0eef1; box-shadow: 0 0 2px #ccc; font: 7px/8px "DejaVu Sans Condensed", "DejaVu Sans", sans-serif; font-stretch: condensed; color: #3c3c3c; }
.body { display: flex; justify-content: space-between; height: 391px; }
.params { width: 271px; }
.dtabs { display: flex; align-items: flex-end; height: 15px; }
.dtabs span { height: 13px; padding: 3px 6px 0; border: 1px solid #d4d3d5; border-bottom: 0; }
.dtabs .cur { height: 16px; margin-bottom: -1px; padding: 4px 7px 0 6px; background: #fff; }
.pane { height: 376px; padding: 0 2px; border: 1px solid #d0cfd1; border-top-color: #dad9db; display: grid; align-content: start; grid-template-rows: 13px 16px 22px 6px 24px 14px 16px 12px 18px 15px 12px 18px 15px 14px 15px 14px 19px; }
.pane > div { display: flex; align-items: center; }
.pane .chk { margin: 0 3px 0 1px; }
.off { color: #999; }
.lay { width: 200px; height: 14px; padding-left: 2px; }
.lay svg { width: 12px; height: 8px; }
.lay .arrow { margin-left: auto; }
.more { width: 14px; height: 12px; margin-left: 5px; line-height: 11px; text-align: center; border: 1px solid #cdccce; border-radius: 2px; background: #fafafa; }
.dic { width: 18px; height: 18px; margin-left: 4px; }
.dic + .dic { margin-left: 5px; }
.wide { width: 264px; }
.clear { width: 8px; height: 6px; margin: 0 7px 0 auto; background: #888; clip-path: polygon(30% 0, 100% 0, 100% 100%, 30% 100%, 0 50%); }
.out { width: 246px; color: #999; padding-left: 2px; }
.adv i { width: 5px; height: 7px; margin: 0 5px 0 3px; background: #222; clip-path: polygon(0 0, 100% 50%, 0 100%); }
.adv b { font-size: 7.500px; color: #222; }
.help { width: 199px; padding: 4px 0 0 1px; background: #fff; border: 1px solid #cdccce; color: #707070; }
.help h1 { margin: 0; height: 19.500px; font: bold 10px/12px "DejaVu Sans", sans-serif; color: #444; }
.intro { display: flex; flex-direction: column; align-items: flex-start; height: 28px; }
.help p { margin: 0; height: 15.650px; line-height: 15px; }
.progress, .actions { display: flex; gap: 4px; align-items: center; height: 12px; margin-top: 18px; }
.actions { margin-top: 5px; padding-right: 3px; }
.bar { width: 424px; height: 12px; text-align: center; border: 1px solid #c4c4c4; background: #f7f6f8; line-height: 10px; }
.btn { width: 50px; height: 12px; text-align: center; line-height: 10px; border: 1px solid #c4c4c6; border-radius: 2px; background: #f0eff1; }
.btn.dim { color: #999; }
.series { width: 102px; margin-right: auto; }
.fold { position: absolute; left: 279px; top: 8px; width: 4px; height: 6px; fill: #444; }
.cursor { position: absolute; left: 835px; top: 533px; width: 9px; height: 13px; }
.pip { position: absolute; left: 1176px; top: 328px; width: 26px; height: 26px; background: #2f7de1; padding: 3px; }

.player { position: absolute; left: 0; top: 560px; width: 1202px; height: 119px; padding: 80px 12px 0 11px; background: linear-gradient(transparent 12%, rgba(0,0,0,.03) 32%, rgba(0,0,0,.12) 48%, rgba(0,0,0,.28) 64%, rgba(0,0,0,.46) 80%, rgba(0,0,0,.57) 90%, rgba(0,0,0,.65)); }
.seek { height: 3px; background: #d0d0d0; }
.played { width: 923px; height: 3px; background: #f00; }
.controls { display: flex; align-items: center; height: 36px; fill: #fff; color: #eee; }
.pl { width: 13px; height: 16px; margin-left: 18px; }
.nx { width: 13px; height: 12px; margin-left: 28px; }
.mu { width: 19px; height: 20px; margin-left: 19px; }
.time { margin-left: 14px; font: 13px/14px Roboto, sans-serif; }
.rightc { display: flex; align-items: center; margin-left: auto; margin-right: 9px; }
.cc { width: 19px; height: 14px; margin-right: 18px; }
.gr { width: 17px; height: 17px; margin-right: 17px; }
.mp { width: 22px; height: 18px; margin-right: 15px; }
.th { width: 20px; height: 14px; margin-right: 18px; }
.fs { width: 16px; height: 16px; }
```
FILE: app.js
```js
// Expand icon lists: ">" drop arrow, "|" group gap, ";" small gap, "*" pressed.
document.querySelectorAll('[data-icons]').forEach(bar => {
  bar.innerHTML = bar.dataset.icons.split(' ').map(t => {
    if (t === '>') return '<i class="drop"></i>';
    if (t === '|') return '<i class="gap"></i>';
    if (t === ';') return '<i class="gap small"></i>';
    const on = t[0] === '*';
    return `<div class="tool${on ? ' on' : ''}"><svg><use href="#${on ? t.slice(1) : t}"/></svg></div>`;
  }).join('');
});

// Track each label to its nominal width.
document.querySelectorAll('[data-w]').forEach(el => {
  const range = document.createRange();
  range.selectNodeContents(el);
  const w = range.getBoundingClientRect().width;
  el.style.letterSpacing = (el.dataset.w - w) / el.textContent.length + 'px';
});
```
